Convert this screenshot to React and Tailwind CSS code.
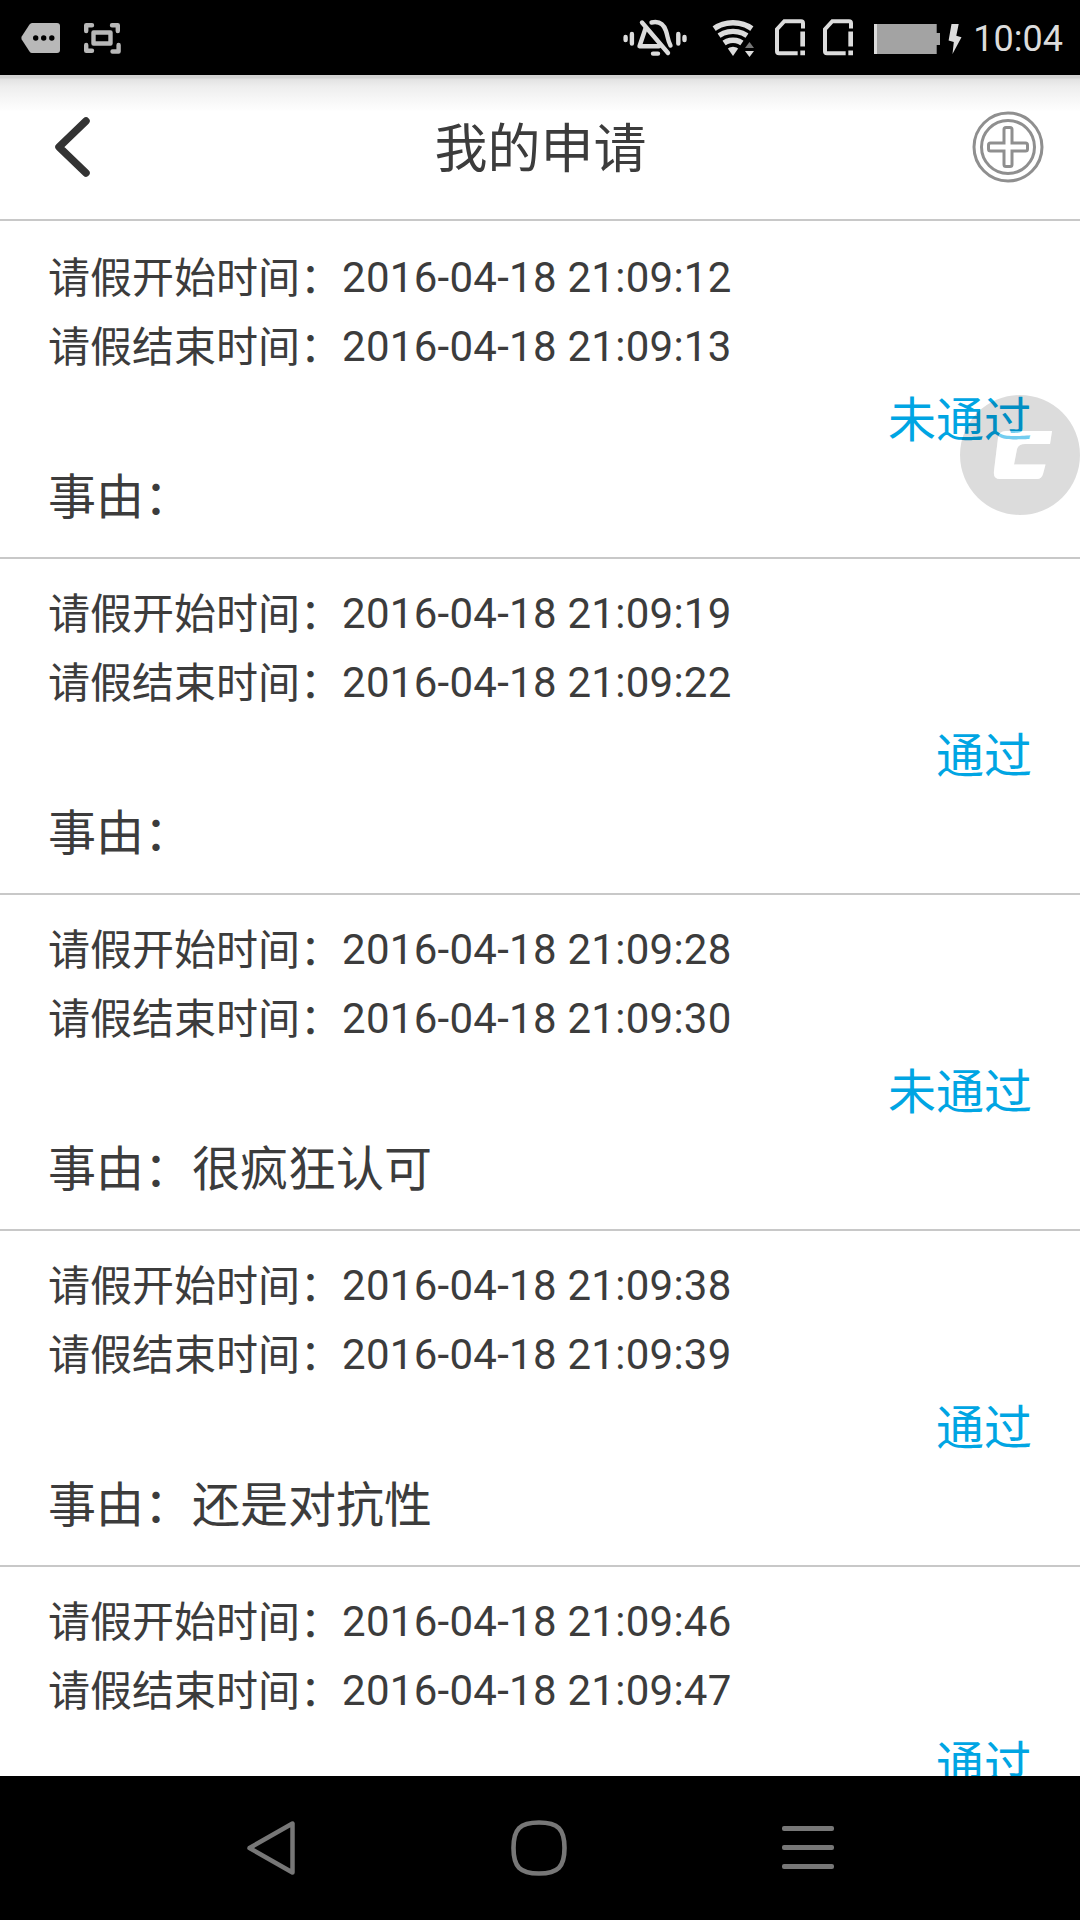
import React from 'react'

const requests = [
  { id: 1, start: '2016-04-18 21:09:12', end: '2016-04-18 21:09:13', status: '未通过', reason: '' },
  { id: 2, start: '2016-04-18 21:09:19', end: '2016-04-18 21:09:22', status: '通过', reason: '' },
  { id: 3, start: '2016-04-18 21:09:28', end: '2016-04-18 21:09:30', status: '未通过', reason: '很疯狂认可' },
  { id: 4, start: '2016-04-18 21:09:38', end: '2016-04-18 21:09:39', status: '通过', reason: '还是对抗性' },
  { id: 5, start: '2016-04-18 21:09:46', end: '2016-04-18 21:09:47', status: '通过', reason: null },
]

function SimIcon(){
  return (
    <svg className="w-[30px] h-[37px]" viewBox="0 0 90 110" fill="none">
      <path d="M68 102H12Q6 102 6 96V30L28 6H78Q84 6 84 12V28" stroke="#dcdcdc" strokeWidth="12" />
      <path d="M76 37H90V82H76ZM76 94H90V108H76Z" fill="#dcdcdc" />
    </svg>
  )
}

function StatusBar(){
  return (
    <div className="flex justify-between h-[75px] shrink-0 bg-black pl-[21px] pr-[17px]">
      <div className="flex gap-6">
        <svg className="w-[39px] h-[75px]" viewBox="21 0 39 75">
          <path d="M32 23H57Q60 23 60 26V50Q60 53 57 53H32Q30.5 53 29.5 51.5L21.7 39.5Q21 38 21.7 36.5L29.5 24.5Q30.5 23 32 23Z" fill="#b8b8b8" />
          <circle cx="35.7" cy="38" r="2.7" />
          <circle cx="43.7" cy="38" r="2.7" />
          <circle cx="51.8" cy="38" r="2.7" />
        </svg>
        <svg className="w-[38px] h-[75px]" viewBox="84 0 38 75" fill="none" stroke="#b8b8b8" strokeWidth="4.4" strokeLinecap="round" strokeLinejoin="round">
          <path d="M92 25.2H86.2V31M112 25.2H117.8V31M86.2 45V50.8H92M112.5 51.5H118.6V45" />
          <rect x="93.5" y="32.5" width="17" height="11" />
        </svg>
      </div>
      <div className="flex items-center">
        <svg className="w-16 h-[75px]" viewBox="623 0 64 75" fill="none" stroke="#dcdcdc" strokeWidth="4.4" strokeLinecap="round" strokeLinejoin="round">
          <path d="M625.6 37V40M631.9 34V43.5M678.3 34V43.5M684.5 37V40M653 53.6H658" />
          <path d="M645.5 28.5L639.5 46.2H659" />
          <path d="M642 22.5L668 53" />
          <path d="M651.5 22.5C660 20.5 664 25 666 31C668 37 667.5 40 670.5 45.5" />
        </svg>
        <svg className="w-[42px] h-[75px] ml-[25px]" viewBox="712 0 42 75">
          <defs>
            <clipPath id="wifiFan"><path d="M733 56L711 24V15H755V24Z" /></clipPath>
          </defs>
          <g clipPath="url(#wifiFan)" fill="none" stroke="#dcdcdc">
            <circle cx="733" cy="56" r="33.2" strokeWidth="5.6" />
            <circle cx="733" cy="56" r="24.6" strokeWidth="5.4" />
            <circle cx="733" cy="56" r="15.8" strokeWidth="5.4" />
            <circle cx="733" cy="56" r="4.6" strokeWidth="9.2" />
          </g>
          <path d="M745 48L749.5 42L754 48Z" fill="#777" />
          <path d="M745 51L749.5 57L754 51Z" fill="#dcdcdc" />
        </svg>
        <div className="flex gap-[18px] ml-[21px]">
          <SimIcon />
          <SimIcon />
        </div>
        <svg className="w-[88px] h-[75px] ml-[21px]" viewBox="874 0 88 75">
          <path d="M877 24H936.7V33H940V45H936.7V54H877Z" fill="#a3a3a3" />
          <path d="M874 24H877V54H874Z" fill="#dcdcdc" />
          <path d="M951.5 24H958.7L956.3 35.8L961.5 37.2L952.5 54L953.8 42L948.6 40.6Z" fill="#dcdcdc" />
        </svg>
        <span className="mt-1 ml-[11px] text-[36px] leading-[75px] text-[#dcdcdc]">10:04</span>
      </div>
    </div>
  )
}

function Header(){
  return (
    <header className="flex items-center justify-between h-[146px] shrink-0 border-b-2 border-[#c8c8c8] pl-[54px] pr-9 bg-[linear-gradient(to_bottom,#d2d2d2_0,#d2d2d2_3px,#e2e2e2_4px,#eeeeee_12px,#f6f6f6_23px,#ffffff_37px)]">
      <svg className="w-[90px] h-[60px]" viewBox="0 0 90 60" fill="none" stroke="#333" strokeWidth="7.5" strokeLinecap="round" strokeLinejoin="round">
        <path d="M32 4L5 30L32 56" />
      </svg>
      <h1 className="mt-1.5 mr-[35px] text-[53px] leading-[72px]">我的申请</h1>
      <svg className="w-[72px] h-[72px]" viewBox="0 0 72 72" fill="none" stroke="#8f8f8f" strokeWidth="3">
        <circle cx="36" cy="36" r="34" />
        <circle cx="36" cy="36" r="26.5" />
        <path d="M32 18.5Q32 16.5 34 16.5H38Q40 16.5 40 18.5V32H53.5Q55.5 32 55.5 34V38Q55.5 40 53.5 40H40V53.5Q40 55.5 38 55.5H34Q32 55.5 32 53.5V40H18.5Q16.5 40 16.5 38V34Q16.5 32 18.5 32H32Z" />
      </svg>
    </header>
  )
}

function TimeRow({ label, value }){
  return (
    <div className="flex h-[69px] text-[42px] leading-[69px]">
      <span className="pt-px">{label}：</span>
      <span className="tracking-[0.27px]">{value}</span>
    </div>
  )
}

function RequestItem({ item }){
  return (
    <li className="flex flex-col h-[336px] shrink-0 border-b-2 border-[#c8c8c8] px-12 pt-5">
      <TimeRow label="请假开始时间" value={item.start} />
      <TimeRow label="请假结束时间" value={item.end} />
      <div className="text-right text-[48px] leading-[80px] text-[#00a5e3]">{item.status}</div>
      {item.reason !== null && <div className="text-[48px] leading-[73px]">事由：{item.reason}</div>}
    </li>
  )
}

function AssistBall(){
  return (
    <svg className="absolute right-0 top-[395px] w-[120px] h-[120px]" viewBox="0 0 120 120">
      <path fillRule="evenodd" d="M60 0A60 60 0 0 1 60 120A60 60 0 0 1 60 0ZM46 36H92L90 49H65Q58.5 49 57 54L54 69.5H85.5L83 79Q81.5 84 77 84H40Q33 84 34 76L38 43Q39 36 46 36Z" fill="#000" fillOpacity="0.137" />
      <path d="M46 36H92L90 49H65Q58.5 49 57 54L54 69.5H85.5L83 79Q81.5 84 77 84H40Q33 84 34 76L38 43Q39 36 46 36Z" fill="#fff" fillOpacity="0.45" />
    </svg>
  )
}

function NavBar(){
  return (
    <nav className="flex items-center h-36 shrink-0 bg-black pl-[246px] text-[#777]">
      <svg className="w-[50px] h-[56px]" viewBox="0 0 50 56" fill="none" stroke="currentColor" strokeWidth="4.5" strokeLinejoin="round">
        <path d="M3.5 28L46.5 3.5V52.5Z" />
      </svg>
      <svg className="w-[56px] h-[56px] ml-[215px]" viewBox="0 0 56 56" fill="none" stroke="currentColor" strokeWidth="4.6">
        <path d="M28 2.5C47 2.5 53.5 9 53.5 28S47 53.5 28 53.5S2.5 47 2.5 28S9 2.5 28 2.5Z" />
      </svg>
      <div className="flex flex-col gap-[14px] w-[52px] ml-[215px] mb-px">
        <div className="h-[5px] rounded-xs bg-current" />
        <div className="h-[5px] rounded-xs bg-current" />
        <div className="h-[5px] rounded-xs bg-current" />
      </div>
    </nav>
  )
}

export default function App(){
  return (
    <div className="relative flex flex-col w-[1080px] h-[1920px] overflow-hidden bg-white text-[#3c3c3c] font-[Roboto,'Noto_Sans_CJK_SC',sans-serif]">
      <StatusBar />
      <Header />
      <ul className="flex flex-col flex-1 min-h-0 overflow-hidden pt-[2px]">
        {requests.map(r => <RequestItem key={r.id} item={r} />)}
      </ul>
      <NavBar />
      <AssistBall />
    </div>
  )
}
